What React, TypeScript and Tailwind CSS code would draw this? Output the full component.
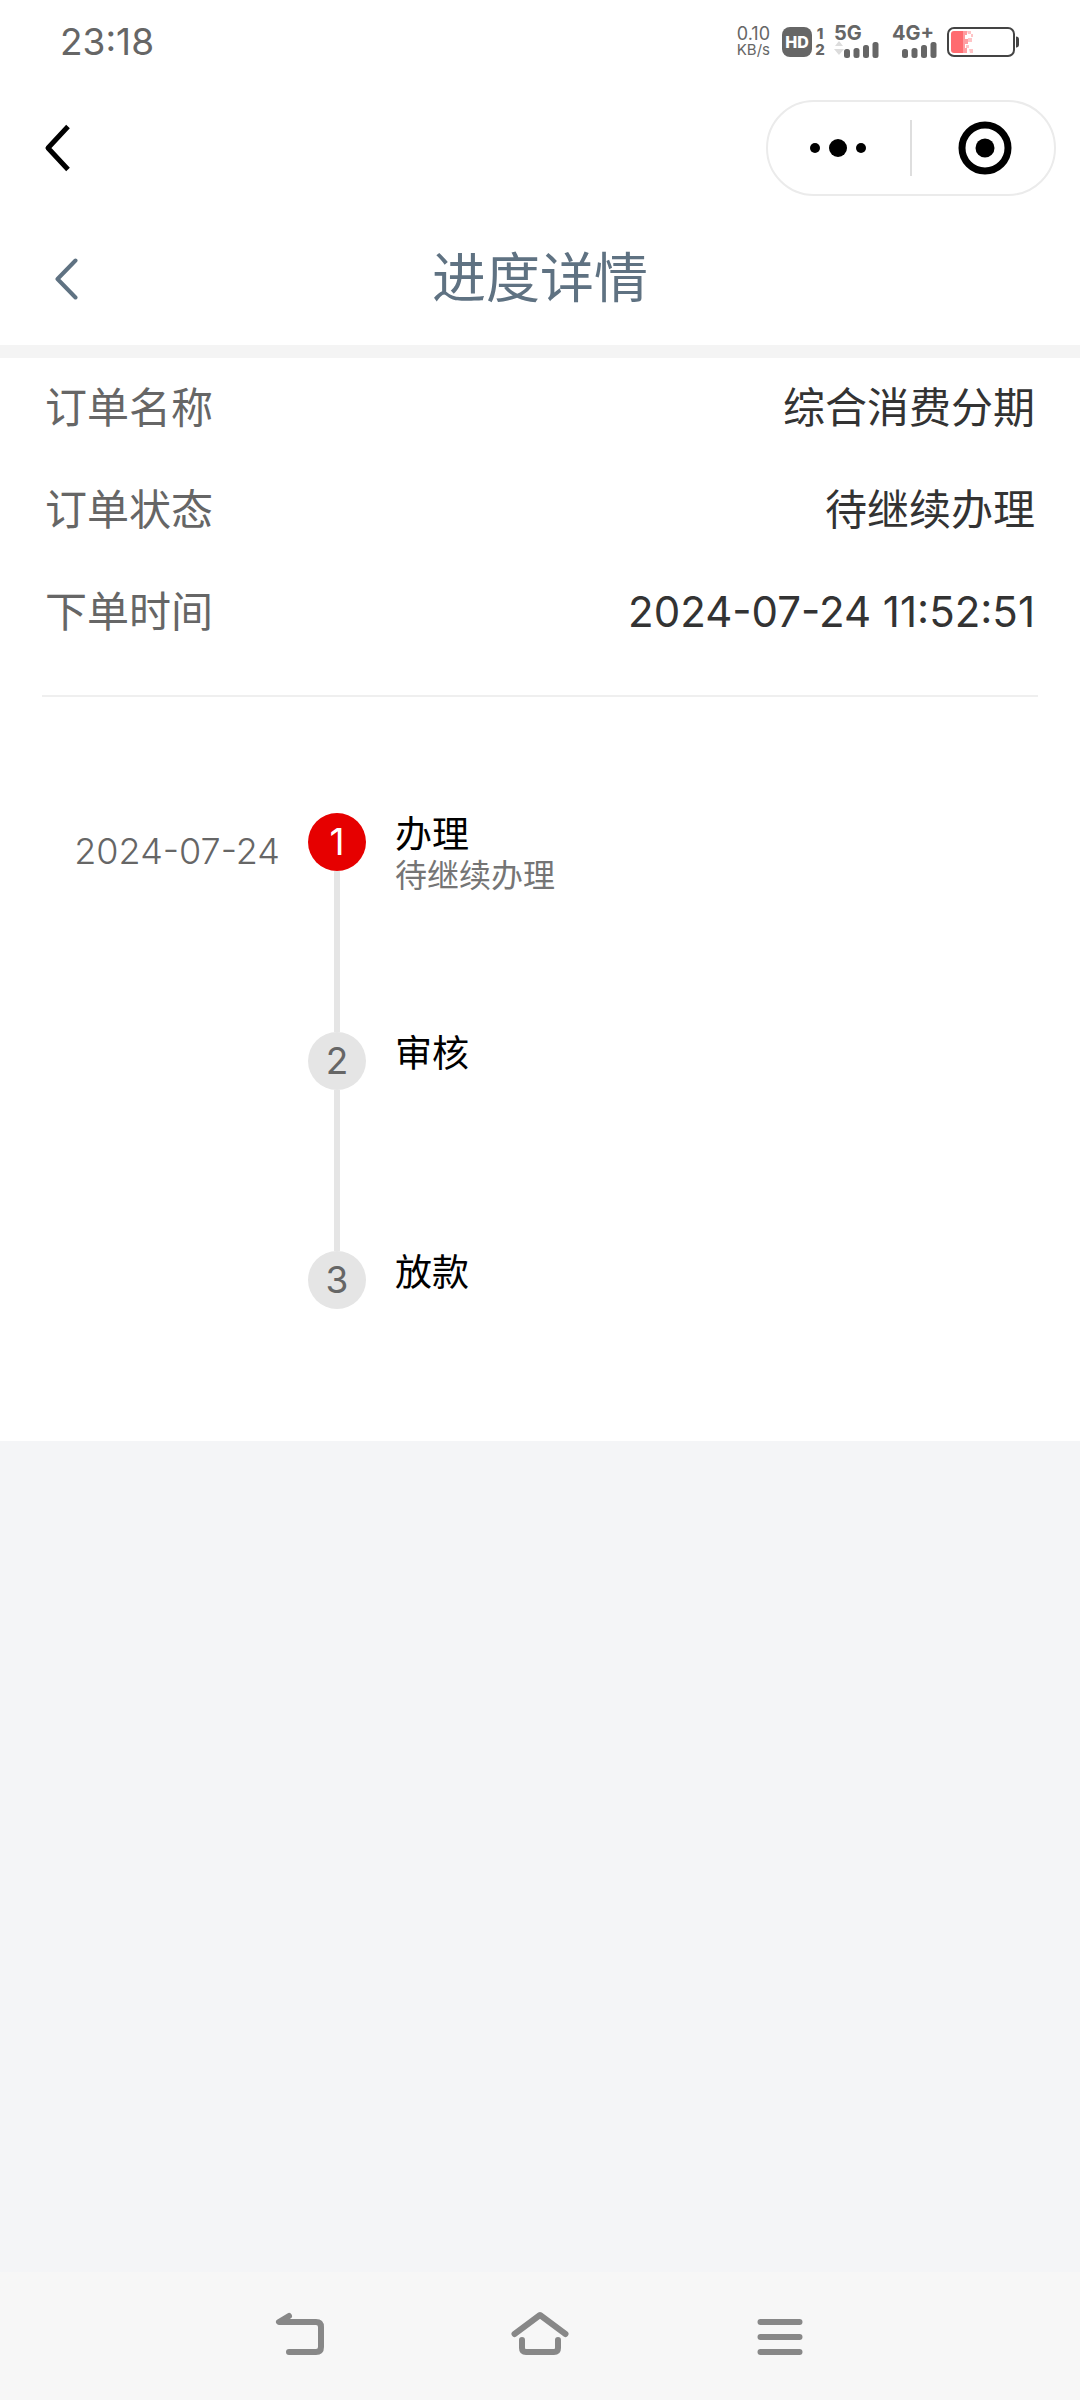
import React from 'react';

interface OrderField {
  label: string;
  value: string;
}

interface Step {
  title: string;
  desc?: string;
  date?: string;
  active?: boolean;
}

const fields: OrderField[] = [
  { label: '订单名称', value: '综合消费分期' },
  { label: '订单状态', value: '待继续办理' },
  { label: '下单时间', value: '2024-07-24 11:52:51' },
];

const steps: Step[] = [
  { title: '办理', desc: '待继续办理', date: '2024-07-24', active: true },
  { title: '审核' },
  { title: '放款' },
];

const SignalBars: React.FC<{ idle?: boolean }> = ({ idle = false }) => (
  <svg width="46" height="17" viewBox="0 0 46 17" className="block" aria-hidden="true">
    {idle && (
      <>
        <path d="M1 5 5 0 9 5z" fill="#dcdcdc" />
        <path d="M0 8h10l-5 6z" fill="#dcdcdc" />
      </>
    )}
    <g fill="#666666">
      <rect x="10" y="8" width="6" height="9" rx="2.500" />
      <rect x="19.500" y="7" width="6" height="10" rx="2.500" />
      <rect x="29" y="4" width="6" height="13" rx="2.500" />
      <rect x="38.500" y="1" width="6" height="16" rx="2.500" />
    </g>
  </svg>
);

const BatteryIcon = () => (
  <svg width="74" height="32" viewBox="0 0 74 32" className="block" aria-hidden="true">
    <rect x="2" y="2" width="66" height="28" rx="6" fill="#fff" stroke="#444" strokeWidth="2" />
    <path d="M70 10.500c2 0 3 1 3 3v5c0 2-1 3-3 3z" fill="#444" />
    <path d="M8 5h9v22H8a3 3 0 0 1-3-3V8a3 3 0 0 1 3-3z" fill="#ff6b70" />
    <path d="M17 5h4v4h-2v4h3v5h-3v4h2v5h-4z" fill="#ff9da1" />
    <path d="M21 5h4v3h-3zM22 12h4v4h-4zM20 19h3v3h-3zM23 23h4v4h-3zM25 8h2v3h-2z" fill="#ffc4c6" />
  </svg>
);

const StatusBar = () => (
  <div className="flex h-[84px] items-center justify-between px-[60px] text-[#666666]">
    <span className="text-[37px] leading-[44px]">23:18</span>
    <div className="flex h-8 items-center">
      <div className="mr-3 flex flex-col items-center">
        <span className="text-[18px] leading-4">0.10</span>
        <span className="text-[15px] leading-4">KB/s</span>
      </div>
      <span className="flex h-[30px] w-[30px] items-center justify-center rounded-lg bg-[#666666] text-[16px] font-extrabold text-white">
        HD
      </span>
      <div className="ml-0.5 mr-2 flex w-3 flex-col items-center text-[15px] font-extrabold leading-4">
        <span>1</span>
        <span>2</span>
      </div>
      <div className="mr-3 flex w-[46px] flex-col">
        <span className="text-[20px] font-bold leading-[15px]">5G</span>
        <SignalBars idle />
      </div>
      <div className="mr-2 flex w-[46px] flex-col">
        <span className="text-[20px] font-bold leading-[15px]">4G+</span>
        <SignalBars />
      </div>
      <BatteryIcon />
    </div>
  </div>
);

const CapsuleBar = () => (
  <div className="flex h-32 items-center justify-between pl-[40px] pr-6">
    <button type="button" aria-label="返回" className="p-1">
      <svg width="28" height="48" viewBox="0 0 28 48" fill="none" stroke="#000" strokeWidth="5">
        <path d="M24 2.500 4 24l20 21.500" strokeLinejoin="round" />
      </svg>
    </button>
    <div className="flex h-24 w-[290px] items-center rounded-full border-2 border-[#ebebeb]">
      <button type="button" aria-label="更多" className="flex h-full flex-1 items-center justify-center">
        <svg width="58" height="20" viewBox="0 0 58 20">
          <circle cx="5" cy="10" r="5" />
          <circle cx="28" cy="10" r="9" />
          <circle cx="51" cy="10" r="5" />
        </svg>
      </button>
      <span className="h-14 w-0.5 bg-[#dedede]" />
      <button type="button" aria-label="关闭" className="flex h-full flex-1 items-center justify-center">
        <svg width="58" height="54" viewBox="0 0 58 54">
          <circle cx="31" cy="27" r="23" fill="none" stroke="#000" strokeWidth="7" />
          <circle cx="31" cy="27" r="9.500" />
        </svg>
      </button>
    </div>
  </div>
);

const PageHeader = () => (
  <header className="grid h-[133px] grid-cols-[1fr_auto_1fr] items-center px-[50px] text-[#5f7282]">
    <button type="button" aria-label="返回上一页" className="justify-self-start p-1">
      <svg width="26" height="42" viewBox="0 0 26 42" fill="none" stroke="currentColor" strokeWidth="4" strokeLinecap="round" strokeLinejoin="round">
        <path d="M21.500 2.500 3.500 21l18 18.500" />
      </svg>
    </button>
    <h1 className="text-[54px] leading-[72px]">进度详情</h1>
  </header>
);

const Timeline = () => (
  <ol className="px-[46px] pb-[132px] pt-[116px]">
    {steps.map((step, index) => {
      const isLast = index === steps.length - 1;
      return (
        <li key={step.title} className="flex">
          <time className="w-[234px] pt-[18px] text-right text-[36px] font-light leading-10 text-[#666666]">{step.date}</time>
          <div className="ml-7 flex flex-col items-center">
            <span
              className={`flex h-[58px] w-[58px] items-center justify-center rounded-full text-[37px] ${
                step.active ? 'bg-[#e60000] text-white' : 'bg-[#e5e5e5] text-[#666666]'
              }`}
            >
              {index + 1}
            </span>
            {!isLast && <span className="h-[161px] w-1.5 bg-[#e5e5e5]" />}
          </div>
          <div className="ml-[29px] flex flex-col">
            <span className="text-[37px] leading-[44px] text-black">{step.title}</span>
            {step.desc && <span className="text-[32px] leading-[38px] text-[#757575]">{step.desc}</span>}
          </div>
        </li>
      );
    })}
  </ol>
);

const SystemNav = () => (
  <nav className="flex h-32 items-center justify-center gap-[180px] bg-[#f7f7f7]">
    <button type="button" aria-label="返回">
      <svg width="60" height="52" viewBox="0 0 60 52" fill="none" stroke="#888888" strokeWidth="6" strokeLinecap="round" strokeLinejoin="round">
        <path d="M19 6 9 12h37q5 0 5 5v20q0 5-5 5H19" />
      </svg>
    </button>
    <button type="button" aria-label="主页">
      <svg width="60" height="52" viewBox="0 0 60 52" fill="none" stroke="#888888" strokeWidth="6" strokeLinecap="round" strokeLinejoin="round">
        <path d="M4.500 24 30 5l25.500 19" />
        <path d="M12 30v8q0 4 4 4h28q4 0 4-4v-8" />
      </svg>
    </button>
    <button type="button" aria-label="最近任务">
      <svg width="60" height="52" viewBox="0 0 60 52" fill="none" stroke="#888888" strokeWidth="6" strokeLinecap="round">
        <path d="M10.500 12h39M10.500 27h39M10.500 42h39" />
      </svg>
    </button>
  </nav>
);

export default function App() {
  return (
    <div lang="zh-CN" className="flex min-h-screen flex-col bg-[#f4f5f7] font-['Inter','Noto_Sans_CJK_SC',sans-serif]">
      <div className="bg-white">
        <StatusBar />
        <CapsuleBar />
        <PageHeader />
      </div>
      <main className="flex-1">
        <section className="border-t-[13px] border-[#f4f4f4] bg-white">
          <dl className="flex flex-col gap-[42px] px-[45px] pb-[53px] pt-5 text-[42px] leading-[60px]">
            {fields.map((field) => (
              <div key={field.label} className="flex justify-between">
                <dt className="text-[#666666]">{field.label}</dt>
                <dd className="text-[#333333]">{field.value}</dd>
              </div>
            ))}
          </dl>
          <hr className="mx-[42px] border-t-2 border-[#efefef]" />
          <Timeline />
        </section>
      </main>
      <SystemNav />
    </div>
  );
}
